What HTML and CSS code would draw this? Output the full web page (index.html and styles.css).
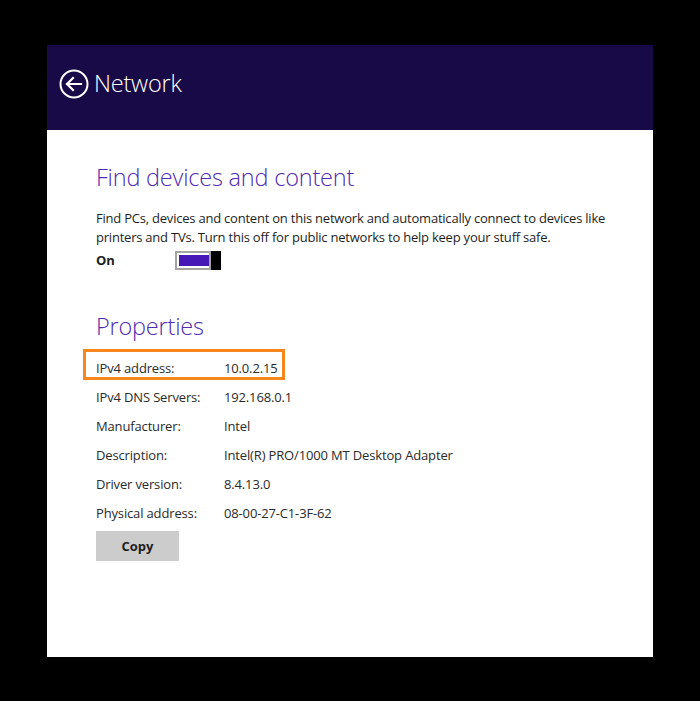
FILE: index.html
```html
<!DOCTYPE html>
<html>
<head>
<meta charset="utf-8">
<link rel="stylesheet" href="styles.css">
</head>
<body>
<div class="window">
  <header class="header">
    <svg class="back" width="30" height="30" viewBox="0 0 30 30">
      <circle cx="15" cy="15" r="13.5" fill="none" stroke="#fff" stroke-width="2"/>
      <path d="M8 15 H22 M14 9 L8 15 L14 21" fill="none" stroke="#fff" stroke-width="2.2" stroke-linecap="square"/>
    </svg>
    <span class="title">Network</span>
  </header>
  <main class="content">
    <h2 class="heading h-find">Find devices and content</h2>
    <p class="desc">Find PCs, devices and content on this network and automatically connect to devices like printers and TVs. Turn this off for public networks to help keep your stuff safe.</p>
    <div class="toggle-row">
      <span class="on">On</span>
      <div class="toggle"><div class="track"><div class="fill"></div></div><div class="thumb"></div></div>
    </div>
    <h2 class="heading h-props">Properties</h2>
    <div class="props">
      <div class="row highlight"><span class="label">IPv4 address:</span><span class="value">10.0.2.15</span></div>
      <div class="row"><span class="label">IPv4 DNS Servers:</span><span class="value">192.168.0.1</span></div>
      <div class="row"><span class="label">Manufacturer:</span><span class="value">Intel</span></div>
      <div class="row"><span class="label">Description:</span><span class="value">Intel(R) PRO/1000 MT Desktop Adapter</span></div>
      <div class="row"><span class="label">Driver version:</span><span class="value">8.4.13.0</span></div>
      <div class="row"><span class="label">Physical address:</span><span class="value">08-00-27-C1-3F-62</span></div>
    </div>
    <button class="copy">Copy</button>
  </main>
</div>
</body>
</html>
```

FILE: styles.css
```css
html, body {
  margin: 0;
  padding: 0;
  background: #000;
}
body {
  width: 700px;
  height: 701px;
  padding-top: 45px;
  padding-left: 47px;
  box-sizing: border-box;
  font-family: "Open Sans", "Noto Sans", sans-serif;
}
.window {
  width: 606px;
  height: 612px;
  background: #fff;
}
.header {
  height: 85px;
  background: #180a47;
  display: flex;
  align-items: center;
  padding-left: 12px;
  padding-bottom: 7px;
  box-sizing: border-box;
}
.back {
  display: block;
}
.title {
  color: #fff;
  font-size: 23.5px;
  font-weight: 300;
  margin-left: 5px;
  margin-top: -2px;
  letter-spacing: -0.2px;
}
.content {
  padding-left: 49px;
  padding-top: 30px;
}
.heading {
  margin: 0;
  color: #4f2cb0;
  font-weight: 300;
  font-size: 23.5px;
  line-height: 34px;
  letter-spacing: -0.2px;
}
.desc {
  margin: 15px 0 0 0;
  font-size: 13px;
  line-height: 19px;
  color: #1e1e1e;
  width: 520px;
  letter-spacing: -0.22px;
}
.toggle-row {
  display: flex;
  align-items: center;
  margin-top: 3px;
  height: 20px;
}
.on {
  font-size: 13px;
  font-weight: 700;
  color: #1e1e1e;
  width: 79px;
}
.toggle {
  display: flex;
  height: 19px;
}
.track {
  width: 36px;
  height: 19px;
  box-sizing: border-box;
  border: 2px solid #a4a4a4;
  padding: 2px 0 2px 2px;
  background: #fff;
}
.fill {
  height: 100%;
  background: #4619b7;
}
.thumb {
  width: 10px;
  height: 19px;
  background: #000;
}
.h-props {
  margin-top: 39px;
}
.props {
  margin-top: 10px;
}
.row {
  display: flex;
  align-items: center;
  height: 29px;
  font-size: 13px;
  color: #2a2a2a;
  letter-spacing: -0.15px;
}
.label {
  width: 128px;
}
.highlight {
  position: relative;
}
.highlight::after {
  content: "";
  position: absolute;
  left: -13px;
  top: -4px;
  width: 202px;
  height: 31px;
  box-sizing: border-box;
  border: 3px solid #f7861c;
}
.copy {
  margin-top: 4px;
  width: 83px;
  height: 30px;
  border: none;
  background: #cccccc;
  font-family: "Open Sans", "Noto Sans", sans-serif;
  font-weight: 700;
  font-size: 13px;
  color: #1e1e1e;
  padding: 0;
}
```
